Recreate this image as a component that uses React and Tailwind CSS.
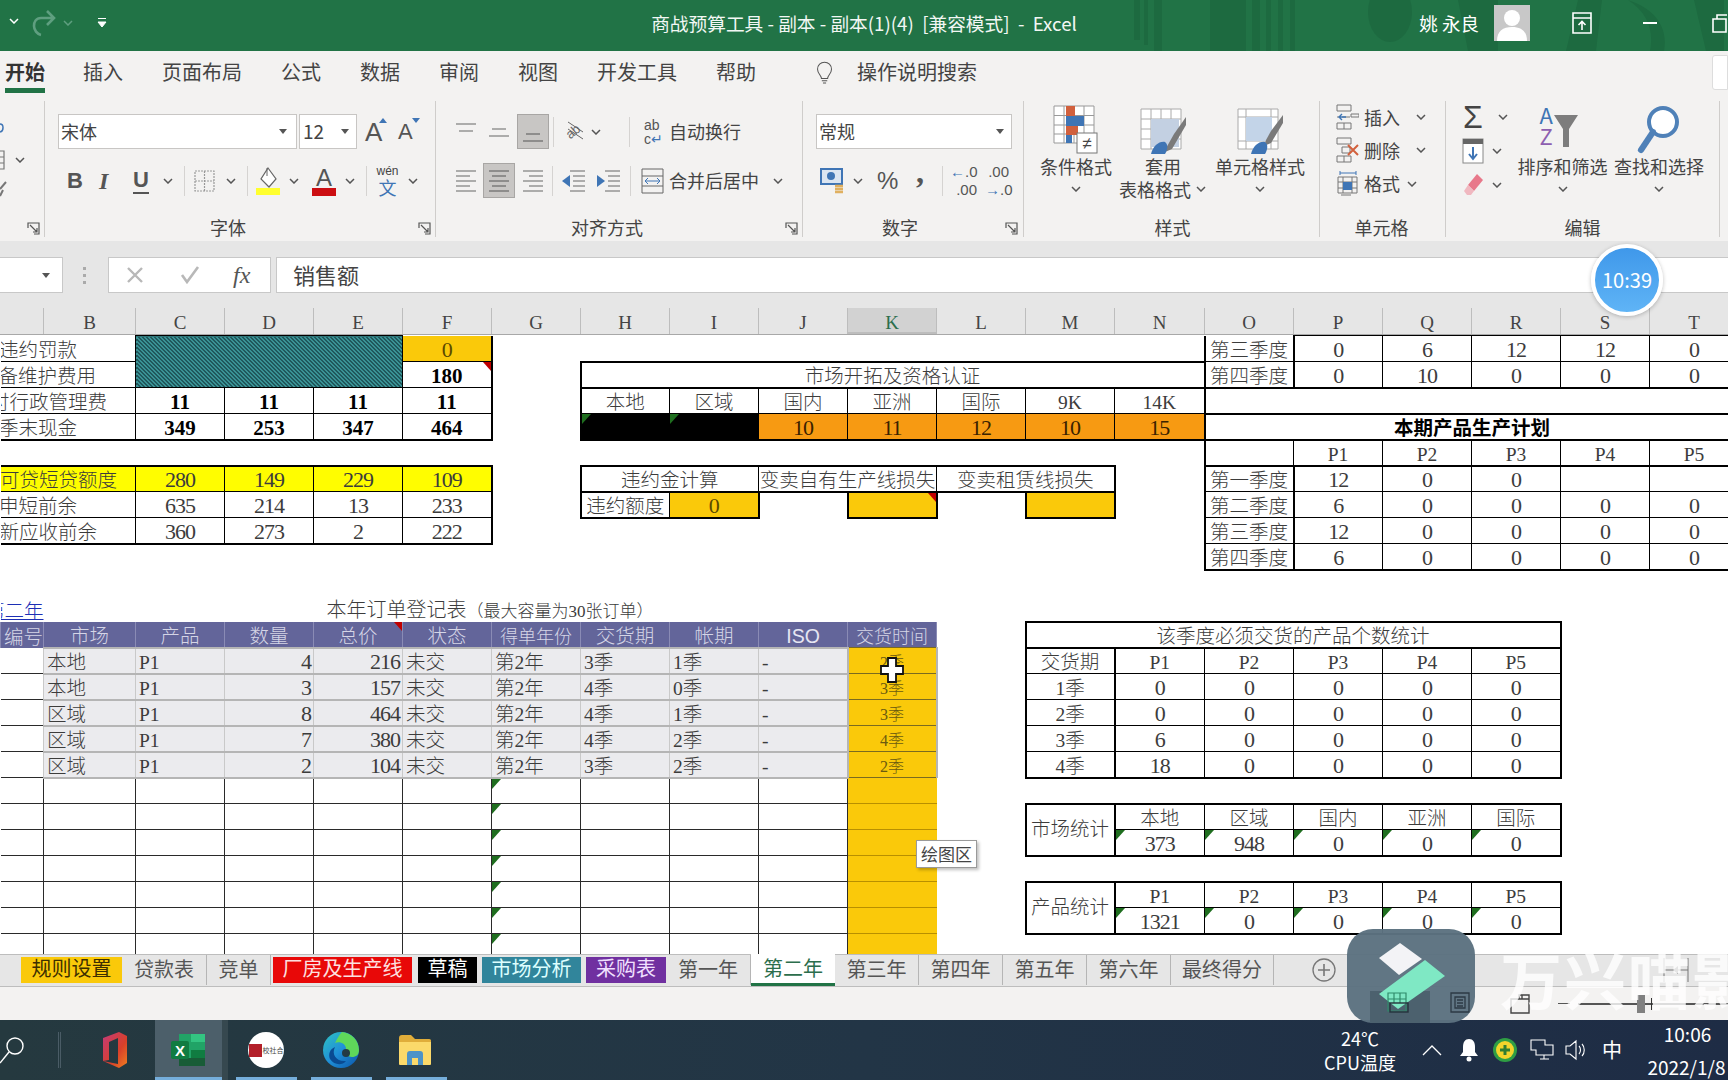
import React from 'react';

const cols = [43, 92, 89, 89, 89, 89, 89, 89, 89, 89, 89, 89, 89, 90, 89, 89, 89, 89, 89, 89];
const letters = ['', 'B', 'C', 'D', 'E', 'F', 'G', 'H', 'I', 'J', 'K', 'L', 'M', 'N', 'O', 'P', 'Q', 'R', 'S', 'T'];

const c = (t = '', cls = '', span = 1, rs = 1, mark = '') => ({ t, cls, span, rs, mark });
const lab = (t, pr, b) => c(<div className={`flex justify-end whitespace-nowrap ${pr}`}>{t}</div>, b, 2);
const blank = (n = 1) => c('', '', n);

const thin = 'border border-black';
const hatch = 'bg-[repeating-linear-gradient(45deg,#143c40_0,#143c40_0.9px,#46aeb1_0.9px,#46aeb1_2.828px)] border border-black';
const yellow = 'bg-[#fffd00] border border-black border-t-2';
const gold = 'bg-[#fac90a] text-[#5a4a00]';
const bold = 'font-bold text-black border border-black';
const ql = 'border-l-2 border-r-2 border-b border-black';
const purple = 'bg-[#63659a] text-[#d5d5e6] border-x border-[#8a8bb5]';
const od = 'bg-[#ebebee] border-x border-y-2 border-x-[#c9c9c9] border-y-[#b5b5b5]';
const odl = `${od} text-left pl-[3px]`;
const odr = `${od} text-right pr-[2px]`;
const gd = 'bg-[#fac90a] text-[#6b5b10] text-[16px] border-y border-x-2 border-y-[#7a6a20] border-x-[#b5b5b5]';
const em = 'border border-[#2a2a2a]';
const gridRow = () => [c('', 'border-b border-[#2a2a2a]'), ...[0, 1, 2, 3, 4].map(() => c('', em)), c('', em, 1, 1, 'g'), c('', em), c('', em), c('', em), c('', 'bg-[#fac90a] border-y border-[#b88f00]')];
const order = (a, b, d, e, f, g) => [
  c('', 'border-b border-[#2a2a2a]'),
  c(a, odl), c('P1', odl), c(b, odr), c(d, odr), c('未交', odl), c('第2年', odl), c(e, odl), c(f, odl), c('-', odl), c(g, gd),
];
const five = (v, cls = thin) => v.map((x) => c(x, cls));
const statM = (v) => v.map((x, i) => c(x, `border-l border-t border-b-2 border-black ${i === 4 ? 'border-r-2' : 'border-r'}`, 1, 1, 'g'));

const rows = [
  [lab('违约罚款', 'pr-[58px]', 'border-b border-black'), c('', hatch, 3, 2), c('0', `${gold} border-b border-r-2 border-black`), blank(8), c('第三季度', ql), ...five([0, 6, 12, 12, 0])],
  [lab('设备维护费用', 'pr-[39px]', 'border-b border-black'), c('180', 'font-bold text-black border-r-2 border-b border-black', 1, 1, 'r'), blank(), c('市场开拓及资格认证', 'border-2 border-black', 7), c('第四季度', 'border-l-2 border-r-2 border-b-2 border-black'), ...five([0, 10, 0, 0, 0], 'border-x border-t border-b-2 border-black')],
  [lab('支付行政管理费', 'pr-[28px]', 'border-b border-black'), c('11', bold), c('11', bold), c('11', bold), c('11', 'font-bold text-black border-y border-l border-r-2 border-black'), blank(), c('本地', `${thin} border-l-2`), c('区域', thin), c('国内', thin), c('亚洲', thin), c('国际', thin), c('9K', thin), c('14K', 'border-y border-l border-r-2 border-black'), c('', 'border-l-2 border-y-2 border-black', 6)],
  [lab('季末现金', 'pr-[58px]', 'border-b-2 border-black'), c('349', `${bold} border-b-2`), c('253', `${bold} border-b-2`), c('347', `${bold} border-b-2`), c('464', 'font-bold text-black border-t border-l border-r-2 border-b-2 border-black'), blank(), c('', 'bg-black border-l-2 border-b-2 border-black', 1, 1, 'g'), c('', 'bg-black border-b-2 border-black', 1, 1, 'g'), ...['10', '11', '12', '10', '15'].map((x) => c(x, 'bg-[#f79a12] text-[#3a2200] border-x border-t border-b-2 border-black')), c('本期产品生产计划', 'font-bold text-black border-l-2 border-y-2 border-black', 6)],
  [blank(14), c('', 'border-l-2 border-b-2 border-black'), ...five(['P1', 'P2', 'P3', 'P4', 'P5'], 'border-x border-t border-b-2 border-black')],
  [lab('可贷短贷额度', 'pr-[18px]', 'bg-[#fffd00] border-t-2 border-b border-black'), c('280', yellow), c('149', yellow), c('229', yellow), c('109', 'bg-[#fffd00] border-t-2 border-b border-l border-r-2 border-black'), blank(), c('违约金计算', 'border-l-2 border-t-2 border-b-2 border-r border-black', 2), c('变卖自有生产线损失', 'border-t-2 border-b-2 border-r border-black text-[19.5px]', 2), c('变卖租赁线损失', 'border-t-2 border-b-2 border-r-2 border-black', 2), blank(), c('第一季度', ql), ...five([12, 0, 0, '', ''])],
  [lab('申短前余', 'pr-[58px]', 'border-b border-black'), ...five([635, 214, 13]), c('233', 'border-y border-l border-r-2 border-black'), blank(), c('违约额度', 'border-l-2 border-b-2 border-r border-black'), c('0', `${gold} border-b-2 border-r-2 border-black`), blank(), c('', `${gold} border-x-2 border-b-2 border-black`, 1, 1, 'r'), blank(), c('', `${gold} border-x-2 border-b-2 border-black`), blank(), c('第二季度', ql), ...five([6, 0, 0, 0, 0])],
  [lab('新应收前余', 'pr-[38px]', 'border-b-2 border-black'), ...five([360, 273, 2], 'border-x border-t border-b-2 border-black'), c('222', 'border-t border-l border-r-2 border-b-2 border-black'), blank(8), c('第三季度', ql), ...five([12, 0, 0, 0, 0])],
  [blank(14), c('第四季度', 'border-l-2 border-r-2 border-b-2 border-black'), ...five([6, 0, 0, 0, 0], 'border-x border-t border-b-2 border-black')],
  [blank(20)],
  [c(<div className="flex justify-end whitespace-nowrap text-[#1c2fb5] underline">第二年</div>, ''), c(<span>本年订单登记表<span className="text-[17px]">（最大容量为30张订单）</span></span>, 'text-[20px]', 10), blank(9)],
  [c(<div className="flex justify-end whitespace-nowrap">编号</div>, purple), c('市场', purple), c('产品', purple), c('数量', purple), c('总价', purple, 1, 1, 'r'), c('状态', purple), c('得单年份', `${purple} text-[18px]`), c('交货期', purple), c('帐期', purple), c(<span className="font-['Liberation_Sans',sans-serif] text-[#e6e6f2]">ISO</span>, purple), c('交货时间', `${purple} text-[18px]`), blank(), c('该季度必须交货的产品个数统计', 'border-2 border-black', 6), blank(2)],
  [...order('本地', 4, 216, '3季', '1季', '2季'), blank(), c('交货期', 'border-l-2 border-r-2 border-b border-black'), ...five(['P1', 'P2', 'P3', 'P4']), c('P5', 'border-y border-l border-r-2 border-black'), blank(2)],
  [...order('本地', 3, 157, '4季', '0季', '3季'), blank(), c('1季', ql), ...five([0, 0, 0, 0]), c('0', 'border-y border-l border-r-2 border-black'), blank(2)],
  [...order('区域', 8, 464, '4季', '1季', '3季'), blank(), c('2季', ql), ...five([0, 0, 0, 0]), c('0', 'border-y border-l border-r-2 border-black'), blank(2)],
  [...order('区域', 7, 380, '4季', '2季', '4季'), blank(), c('3季', ql), ...five([6, 0, 0, 0]), c('0', 'border-y border-l border-r-2 border-black'), blank(2)],
  [...order('区域', 2, 104, '3季', '2季', '2季'), blank(), c('4季', 'border-l-2 border-r-2 border-b-2 border-black'), ...five([18, 0, 0, 0], 'border-x border-t border-b-2 border-black'), c('0', 'border-t border-l border-r-2 border-b-2 border-black'), blank(2)],
  [...gridRow(), blank(9)],
  [...gridRow(), blank(), c('市场统计', 'border-2 border-black', 1, 2), ...['本地', '区域', '国内', '亚洲', '国际'].map((x, i) => c(x, `border-t-2 border-x border-b border-black ${i === 4 ? 'border-r-2' : ''}`)), blank(2)],
  [...gridRow(), blank(), ...statM([373, 948, 0, 0, 0]), blank(2)],
  [...gridRow(), blank(9)],
  [...gridRow(), blank(), c('产品统计', 'border-2 border-black', 1, 2), ...['P1', 'P2', 'P3', 'P4', 'P5'].map((x, i) => c(x, `border-t-2 border-x border-b border-black ${i === 4 ? 'border-r-2' : ''}`)), blank(2)],
  [...gridRow(), blank(), ...statM([1321, 0, 0, 0, 0]), blank(2)],
  [...gridRow(), blank(9)],
];

function Mark({ m }) {
  if (m === 'g') return <div className="absolute left-0 top-0 h-0 w-0 border-t-[10px] border-r-[9px] border-t-[#1f6e1f] border-r-transparent" />;
  if (m === 'r') return <div className="absolute right-0 top-0 h-0 w-0 border-t-[9px] border-l-[8px] border-t-[#c00000] border-l-transparent" />;
  return null;
}

function Content({ x }) {
  if ((typeof x.t === 'number' || typeof x.t === 'string') && /^\d+$/.test(String(x.t))) {
    return <span className={x.cls.includes('font-bold') ? 'text-[21px]' : 'text-[22px] tracking-[-1px]'}>{x.t}</span>;
  }
  return x.t;
}

function Sheet() {
  return (
    <div className="h-[619px] shrink-0 overflow-hidden bg-white">
      <table className="w-[1738px] table-fixed border-collapse font-['Liberation_Serif','Noto_Sans_CJK_SC',serif] text-[19.5px] font-light leading-[20px] text-[#3c3c3c]">
        <colgroup>
          {cols.map((w, i) => (
            <col key={i} style={{ width: w }} />
          ))}
        </colgroup>
        <tbody>
          {rows.map((r, i) => (
            <tr key={i} className="h-[26px]">
              {r.map((x, j) => (
                <td key={j} colSpan={x.span} rowSpan={x.rs} className={`relative overflow-hidden whitespace-nowrap p-0 text-center ${x.rs > 1 ? 'align-middle' : 'align-bottom'} ${x.cls}`}>
                  <Mark m={x.mark} />
                  <Content x={x} />
                </td>
              ))}
            </tr>
          ))}
        </tbody>
      </table>
    </div>
  );
}

const Chev = ({ cls = '', color = '#555' }) => (
  <svg width="10" height="6" viewBox="0 0 10 6" className={`shrink-0 ${cls}`}>
    <path d="M1 1l4 4 4-4" fill="none" stroke={color} strokeWidth="1.5" />
  </svg>
);
const Caret = ({ cls = '' }) => (
  <svg width="8" height="5" viewBox="0 0 8 5" className={`shrink-0 ${cls}`}>
    <path d="M0 0h8L4 5z" fill="#555" />
  </svg>
);
const Lines = ({ d, w = 20, h = 24, cls = '', stroke = '#666', dash }) => (
  <svg width={w} height={h} viewBox={`0 0 ${w} ${h}`} className={`shrink-0 ${cls}`}>
    <path d={d} fill="none" stroke={stroke} strokeWidth="1.2" strokeDasharray={dash} />
  </svg>
);
const Sep = ({ cls = '' }) => <div className={`h-[30px] w-px shrink-0 bg-[#d5d3d1] ${cls}`} />;
const Launcher = ({ cls = '' }) => (
  <svg width="13" height="13" viewBox="0 0 13 13" className={`absolute top-[3px] ${cls}`}>
    <path d="M1 6V1h11v11H7M3 3l7 7M10 6v4H6" fill="none" stroke="#555" strokeWidth="1.2" />
  </svg>
);
const GroupLabel = ({ children, cls = '', launcher }) => (
  <div className={`relative mb-[2px] h-[16px] shrink-0 text-center text-[18px] leading-[16px] text-[#444] ${cls}`}>
    {children}
    {launcher}
  </div>
);
const RowF = ({ children }) => <div className="flex h-[35px] shrink-0 items-center">{children}</div>;
const Group = ({ w, children, last }) => (
  <div className={`flex h-[136px] shrink-0 flex-col ${w} ${last ? '' : 'border-r border-[#cfcdcb]'}`}>{children}</div>
);

function TitleBar() {
  return (
    <div className="relative grid h-[51px] shrink-0 grid-cols-[1fr_auto_1fr] items-center overflow-hidden bg-[#217346] pb-[5px] text-white">
      <svg width="600" height="51" viewBox="0 0 600 51" className="absolute left-[1128px] top-0">
        <g fill="#1d6a40">
          <rect x="6" y="0" width="6" height="40" />
          <rect x="16" y="0" width="4" height="45" />
          <rect x="26" y="0" width="8" height="51" />
          <rect x="82" y="0" width="36" height="51" />
          <rect x="124" y="0" width="8" height="51" />
          <rect x="138" y="0" width="5" height="51" />
          <rect x="150" y="0" width="5" height="51" />
          <rect x="162" y="0" width="5" height="51" />
          <ellipse cx="262" cy="12" rx="22" ry="30" />
          <path d="M330 0h40v51h-30zM450 0h24l-6 51h-30zM500 0c30 10 40 30 36 51h-14c4-20-2-38-22-51zM566 0h30v51h-18z" />
        </g>
      </svg>
      <div className="relative flex items-center pl-[9px]">
        <Chev color="#fff" cls="mt-[-4px]" />
        <svg width="26" height="30" viewBox="0 0 26 30" className="ml-[12px]">
          <path d="M22 10H10C5 10 3 14 3 18s3 8 7 9M16 3l7 7-7 7" fill="none" stroke="#5f9f80" strokeWidth="2.6" />
        </svg>
        <Chev color="#5f9f80" cls="ml-[6px]" />
        <svg width="10" height="12" viewBox="0 0 10 12" className="ml-[24px]">
          <path d="M1 1.5h8M1 5h8l-4 5z" fill="#fff" stroke="#fff" />
        </svg>
      </div>
      <div className="relative whitespace-pre text-[18.7px] leading-none text-[#f2f7f4]">{'商战预算工具 - 副本 - 副本(1)(4)  [兼容模式]  -  Excel'}</div>
      <div className="relative flex items-center justify-end">
        <div className="mr-[15px] whitespace-nowrap text-[18.5px] leading-none">姚 永良</div>
        <div className="mr-[42px] flex h-[36px] w-[36px] items-end justify-center overflow-hidden bg-[#c8c8c8]">
          <svg width="36" height="36" viewBox="0 0 36 36">
            <circle cx="18" cy="13" r="8" fill="#fff" />
            <path d="M3 36c0-10 6-14 15-14s15 4 15 14z" fill="#fff" />
          </svg>
        </div>
        <svg width="20" height="22" viewBox="0 0 20 22" className="mr-[51px]">
          <path d="M1 1h18v20H1zM1 6h18M10 18v-8M6.5 13l3.5-3.5 3.5 3.5" fill="none" stroke="#fff" strokeWidth="1.6" />
        </svg>
        <div className="mr-[55px] h-[2px] w-[14px] bg-white" />
        <svg width="16" height="20" viewBox="0 0 16 20">
          <path d="M1 6h13v13H1zM5 6V2h10" fill="none" stroke="#fff" strokeWidth="1.6" />
        </svg>
      </div>
    </div>
  );
}

function Tabs() {
  const items = [
    ['插入', 'ml-[38px]'],
    ['页面布局', 'ml-[39px]'],
    ['公式', 'ml-[39px]'],
    ['数据', 'ml-[39px]'],
    ['审阅', 'ml-[39px]'],
    ['视图', 'ml-[39px]'],
    ['开发工具', 'ml-[39px]'],
    ['帮助', 'ml-[39px]'],
  ];
  return (
    <div className="flex h-[49px] shrink-0 items-start bg-[#f3f2f1] pl-[5px] text-[20px] leading-[42px] text-[#444]">
      <div className="flex h-[42px] w-[41px] flex-col items-center whitespace-nowrap font-bold text-[#333]">
        <span className="h-[37px]">开始</span>
        <div className="h-[5px] w-full shrink-0 bg-[#217346]" />
      </div>
      {items.map(([t, m]) => (
        <span key={t} className={`whitespace-nowrap ${m}`}>{t}</span>
      ))}
      <svg width="22" height="28" viewBox="0 0 22 28" className="ml-[60px] mt-[8px]">
        <path d="M7 21c0-4-5-6-5-12a9 9 0 0 1 18 0c0 6-5 8-5 12zM7.5 24h7M9 27h4" fill="none" stroke="#555" strokeWidth="1.3" />
      </svg>
      <span className="ml-[24px] whitespace-nowrap text-[20px]">操作说明搜索</span>
      <div className="ml-[735px] mt-[4px] h-[35px] w-[20px] rounded-l-[3px] border border-[#ddd] bg-white" />
    </div>
  );
}

const BigBtn = ({ w, icon, lines, chevMl = '' }) => (
  <div className={`flex shrink-0 flex-col items-center ${w}`}>
    <div className="flex h-[53px] items-end">{icon}</div>
    <div className="whitespace-nowrap text-center text-[18px] leading-[24px] text-[#444]">{lines}</div>
    <Chev cls={`mt-[8px] ${chevMl}`} />
  </div>
);

function Ribbon() {
  const ICondFmt = (
    <svg width="48" height="50" viewBox="0 0 48 50">
      <path d="M2 2h40v37H2zM2 11.5h40M2 21h40M2 30h40M12 2v37M22 2v37M32 2v37" fill="#fff" stroke="#999" strokeWidth="1" />
      <rect x="14" y="2" width="9" height="10" fill="#d1603d" />
      <rect x="14" y="12" width="18" height="10" fill="#3f75b5" />
      <rect x="14" y="22" width="12" height="9" fill="#d1603d" />
      <rect x="14" y="31" width="6" height="8" fill="#3f75b5" />
      <rect x="25" y="29" width="20" height="20" fill="#fff" stroke="#777" />
      <text x="35" y="45" textAnchor="middle" fontSize="17" fill="#444" fontFamily="Liberation Sans">≠</text>
    </svg>
  );
  const ITable = (
    <svg width="46" height="46" viewBox="0 0 46 46">
      <path d="M1 1h40v40H1zM1 11h40M1 21h40M1 31h40M11 1v40M21 1v40M31 1v40" fill="#fff" stroke="#aaa" />
      <rect x="11" y="11" width="28" height="28" fill="#c3d0e2" />
      <path d="M25 42l9-16 12-17 0 8-14 24-7 3" fill="#7a7a7a" />
      <path d="M11 46c2-8 8-13 14-12 3 2 3 7 0 12z" fill="#3f75b5" />
    </svg>
  );
  const IStyle = (
    <svg width="46" height="46" viewBox="0 0 46 46">
      <path d="M1 1h40v40H1zM1 9h40M1 33h40M9 1v40M34 1v40" fill="#fff" stroke="#aaa" />
      <rect x="9" y="9" width="26" height="24" fill="#c3d4e8" />
      <path d="M29 32l5-9 12-16 0 8-12 20-7 3" fill="#7a7a7a" />
      <path d="M14 46c2-8 8-13 14-12 3 2 3 7 0 12z" fill="#3f75b5" />
    </svg>
  );
  const ISort = (
    <div className="relative flex h-[50px] w-[46px] items-start">
      <div className="flex flex-col items-center text-[22px] leading-[21px]">
        <span className="text-[#3f75b5]">A</span>
        <span className="text-[#8e5fb0]">Z</span>
      </div>
      <svg width="26" height="34" viewBox="0 0 26 34" className="mt-[10px]">
        <path d="M1 1h24L16 15v18h-6V15z" fill="#7d7d7d" />
      </svg>
    </div>
  );
  const IFind = (
    <svg width="44" height="50" viewBox="0 0 44 50">
      <circle cx="26" cy="18" r="14" fill="#fff" stroke="#4f81b8" strokeWidth="4" />
      <path d="M16 28L4 46" stroke="#4f81b8" strokeWidth="6" strokeLinecap="round" />
    </svg>
  );
  return (
    <div className="relative flex h-[141px] shrink-0 items-start bg-[#f3f2f1] pt-[1px] text-[#444]">
      <Group w="w-[45px]">
        <div className="relative flex-1">
          <svg width="6" height="14" viewBox="0 0 6 14" className="absolute left-0 top-[22px]"><path d="M0 1c4 0 4 7 0 8" fill="none" stroke="#3f75b5" strokeWidth="1.5" /></svg>
          <svg width="6" height="22" viewBox="0 0 6 22" className="absolute left-0 top-[49px]"><path d="M0 1h4v18H0M0 7h4M0 13h4" fill="none" stroke="#777" strokeWidth="1.2" /></svg>
          <Chev cls="absolute left-[15px] top-[56px]" />
          <svg width="7" height="16" viewBox="0 0 7 16" className="absolute left-0 top-[80px]"><path d="M0 8l6-7M0 15l3-6" fill="none" stroke="#777" strokeWidth="2" /></svg>
        </div>
        <GroupLabel launcher={<Launcher cls="left-[27px]" />}>&nbsp;</GroupLabel>
      </Group>

      <Group w="w-[391px]">
        <div className="flex-1 pt-[13px]">
          <RowF>
            <div className="ml-[13px] flex h-[35px] w-[239px] items-center justify-between border border-[#c8c6c4] bg-white pl-[2px] pr-[9px] text-[18px]">
              <span>宋体</span><Caret />
            </div>
            <div className="ml-[2px] flex h-[35px] w-[58px] items-center justify-between border border-[#c8c6c4] bg-white pl-[3px] pr-[7px] text-[19px]">
              <span>12</span><Caret />
            </div>
            <div className="relative ml-[8px] w-[22px] font-['Liberation_Sans',sans-serif] text-[26px] leading-none text-[#555]">A<span className="absolute right-0 top-[-1px] h-0 w-0 border-x-[4px] border-b-[5px] border-x-transparent border-b-[#3f75b5]" /></div>
            <div className="relative ml-[11px] w-[22px] font-['Liberation_Sans',sans-serif] text-[22px] leading-none text-[#555]">A<span className="absolute right-0 top-[-3px] h-0 w-0 border-x-[4px] border-t-[5px] border-x-transparent border-t-[#3f75b5]" /></div>
          </RowF>
          <div className="h-[14px]" />
          <RowF>
            <span className="ml-[22px] w-[14px] font-['Liberation_Sans',sans-serif] text-[22px] font-bold text-[#555]">B</span>
            <span className="ml-[18px] w-[14px] font-['Liberation_Serif',serif] text-[24px] font-bold italic text-[#555]">I</span>
            <span className="ml-[20px] w-[16px] border-b-2 border-[#555] font-['Liberation_Sans',sans-serif] text-[22px] font-bold leading-[24px] text-[#555]">U</span>
            <Chev cls="ml-[14px]" />
            <Sep cls="ml-[11px]" />
            <Lines cls="ml-[9px]" w={21} h={24} stroke="#999" dash="2 1" d="M1 2h19v20H1zM1 12h19M10.5 2v20" />
            <Chev cls="ml-[11px]" />
            <Sep cls="ml-[11px]" />
            <svg width="24" height="28" viewBox="0 0 24 28" className="ml-[8px]">
              <path d="M12 1l8 11-7 8-8-8z" fill="#fff" stroke="#666" strokeWidth="1.2" />
              <path d="M11 1v8" stroke="#666" />
              <rect x="0" y="21" width="24" height="7" fill="#ffff2e" />
            </svg>
            <Chev cls="ml-[9px]" />
            <svg width="24" height="30" viewBox="0 0 24 30" className="ml-[13px]">
              <text x="12" y="20" textAnchor="middle" fontSize="24" fill="#555" fontFamily="Liberation Sans">A</text>
              <rect x="0" y="22" width="24" height="8" fill="#cc0e12" />
            </svg>
            <Chev cls="ml-[9px]" />
            <Sep cls="ml-[11px]" />
            <div className="ml-[10px] flex w-[21px] flex-col items-center">
              <span className="font-['Liberation_Sans',sans-serif] text-[12px] leading-[12px] text-[#444]">wén</span>
              <span className="text-[18px] leading-[20px] text-[#3f75b5]">文</span>
            </div>
            <Chev cls="ml-[10px]" />
          </RowF>
        </div>
        <GroupLabel launcher={<Launcher cls="left-[373px]" />}><span className="relative left-[-12px]">字体</span></GroupLabel>
      </Group>

      <Group w="w-[367px]">
        <div className="flex-1 pt-[13px]">
          <RowF>
            <Lines cls="ml-[20px]" d="M0 4h20M3 11h14" />
            <Lines cls="ml-[13px]" d="M3 9h14M0 16h20" />
            <div className="ml-[8px] flex h-[35px] w-[32px] items-center justify-center border border-[#a8a6a4] bg-[#c8c6c4]">
              <Lines d="M3 14h14M0 21h20" stroke="#555" />
            </div>
            <Sep cls="ml-[4px]" />
            <svg width="20" height="26" viewBox="0 0 20 26" className="ml-[11px]">
              <path d="M3 3l15 10M3 10l15 10" stroke="#666" fill="none" />
              <text x="1" y="17" fontSize="13" fill="#666" transform="rotate(-40 8 13)" fontFamily="Liberation Sans">ab</text>
            </svg>
            <Chev cls="ml-[6px]" />
            <Sep cls="ml-[28px]" />
            <div className="ml-[14px] flex w-[18px] flex-col font-['Liberation_Sans',sans-serif] text-[14px] leading-[14px] text-[#555]">
              <span>ab</span><span>c<span className="text-[#3f75b5]">↵</span></span>
            </div>
            <span className="ml-[7px] whitespace-nowrap text-[18px]">自动换行</span>
          </RowF>
          <div className="h-[14px]" />
          <RowF>
            <Lines cls="ml-[20px]" d="M0 2h20M0 7h14M0 12h20M0 17h14M0 22h20" />
            <div className="ml-[7px] flex h-[35px] w-[32px] items-center justify-center border border-[#a8a6a4] bg-[#c8c6c4]">
              <Lines d="M0 2h20M3 7h14M0 12h20M3 17h14M0 22h20" stroke="#555" />
            </div>
            <Lines cls="ml-[8px]" d="M0 2h20M6 7h14M0 12h20M6 17h14M0 22h20" />
            <Sep cls="ml-[9px]" />
            <svg width="24" height="24" viewBox="0 0 24 24" className="ml-[8px]">
              <path d="M9 2h15M12 7h12M12 12h12M12 17h12M9 22h15" stroke="#666" fill="none" />
              <path d="M9 6v12L1 12z" fill="#3f75b5" />
            </svg>
            <svg width="24" height="24" viewBox="0 0 24 24" className="ml-[11px]">
              <path d="M9 2h15M12 7h12M12 12h12M12 17h12M9 22h15" stroke="#666" fill="none" />
              <path d="M1 6v12l8-6z" fill="#3f75b5" />
            </svg>
            <Sep cls="ml-[10px]" />
            <svg width="23" height="26" viewBox="0 0 23 26" className="ml-[10px]">
              <path d="M1 1h21v24H1zM1 8h21M1 18h21" fill="none" stroke="#666" />
              <path d="M4 13h15M7 10l-3 3 3 3M16 10l3 3-3 3" fill="none" stroke="#3f75b5" />
            </svg>
            <span className="ml-[5px] whitespace-nowrap text-[18px]">合并后居中</span>
            <Chev cls="ml-[14px]" />
          </RowF>
        </div>
        <GroupLabel launcher={<Launcher cls="left-[349px]" />}><span className="relative left-[-12px]">对齐方式</span></GroupLabel>
      </Group>

      <Group w="w-[221px]">
        <div className="flex-1 pt-[13px]">
          <RowF>
            <div className="ml-[13px] flex h-[35px] w-[196px] items-center justify-between border border-[#c8c6c4] bg-white pl-[2px] pr-[7px] text-[18px]">
              <span>常规</span><Caret />
            </div>
          </RowF>
          <div className="h-[14px]" />
          <RowF>
            <svg width="25" height="26" viewBox="0 0 25 26" className="ml-[17px]">
              <rect x="1" y="1" width="21" height="15" fill="#dbe5f1" stroke="#3f75b5" strokeWidth="2" />
              <circle cx="11" cy="8" r="4" fill="#3f75b5" />
              <path d="M15 18h8M15 21h8M15 24h8" stroke="#e0b060" strokeWidth="2.4" />
            </svg>
            <Chev cls="ml-[8px]" />
            <span className="ml-[14px] w-[20px] font-['Liberation_Sans',sans-serif] text-[24px] text-[#555]">%</span>
            <span className="ml-[19px] mt-[-17px] w-[10px] font-['Liberation_Serif',serif] text-[32px] font-bold leading-[20px] text-[#555]">,</span>
            <Sep cls="ml-[16px]" />
            <div className="ml-[7px] flex w-[27px] flex-col font-['Liberation_Sans',sans-serif] text-[15px] leading-[18px] text-[#555]">
              <span className="whitespace-nowrap text-right"><span className="text-[#3f75b5]">←</span>.0</span>
              <span className="whitespace-nowrap text-right">.00</span>
            </div>
            <div className="ml-[8px] flex w-[24px] flex-col font-['Liberation_Sans',sans-serif] text-[15px] leading-[18px] text-[#555]">
              <span className="whitespace-nowrap text-right">.00</span>
              <span className="whitespace-nowrap text-right"><span className="text-[#3f75b5]">→</span>.0</span>
            </div>
          </RowF>
        </div>
        <GroupLabel launcher={<Launcher cls="left-[202px]" />}><span className="relative left-[-13px]">数字</span></GroupLabel>
      </Group>

      <Group w="w-[296px]">
        <div className="flex flex-1">
          <BigBtn w="w-[95px] pl-[9px]" icon={ICondFmt} lines="条件格式" />
          <div className="flex w-[89px] shrink-0 flex-col">
            <div className="flex h-[53px] items-end justify-center pr-[2px]">{ITable}</div>
            <div className="pr-[1px] text-center text-[18px] leading-[24px]">套用</div>
            <div className="flex items-center whitespace-nowrap text-[18px] leading-[22px]">表格格式<Chev cls="ml-[5px]" /></div>
          </div>
          <BigBtn w="w-[104px]" icon={IStyle} lines="单元格样式" />
        </div>
        <GroupLabel><span className="relative left-[1px]">样式</span></GroupLabel>
      </Group>

      <Group w="w-[126px]">
        <div className="flex-1 text-[18px]">
          <div className="flex h-[32px] items-center">
            <svg width="23" height="26" viewBox="0 0 23 26" className="ml-[16px]"><path d="M1 1h14v6H1zM1 19h14v6H1zM8 19v6M1 13h4M15 13h8v-3h-8zM6 13h8" fill="none" stroke="#777" /><path d="M10 13H4M6 10l-3 3 3 3" fill="none" stroke="#3f75b5" strokeWidth="1.4" /></svg>
            <span className="ml-[5px]">插入</span>
            <Chev cls="ml-[16px]" />
          </div>
          <div className="flex h-[34px] items-center">
            <svg width="23" height="26" viewBox="0 0 23 26" className="ml-[16px]"><path d="M1 1h14v6H1zM1 19h14v6H1zM8 19v6M6 10h8v6H6z" fill="none" stroke="#777" /><path d="M12 8l10 10M22 8L12 18" stroke="#d1603d" strokeWidth="2" /></svg>
            <span className="ml-[5px]">删除</span>
            <Chev cls="ml-[16px]" />
          </div>
          <div className="flex h-[33px] items-center">
            <svg width="23" height="28" viewBox="0 0 23 28" className="ml-[16px]"><path d="M2 7h19v16H2zM2 12h19M2 18h19M7 7v16M16 7v16M5 25h10" fill="none" stroke="#777" /><path d="M4 3h16M4 1v4M20 1v4" stroke="#3f75b5" fill="none" /><rect x="7" y="12" width="9" height="8" fill="#3f75b5" /></svg>
            <span className="ml-[5px]">格式</span>
            <Chev cls="ml-[7px]" />
          </div>
        </div>
        <GroupLabel><span className="relative left-[-1px]">单元格</span></GroupLabel>
      </Group>

      <Group w="w-[274px]">
        <div className="flex flex-1">
          <div className="flex w-[69px] shrink-0 flex-col">
            <div className="flex h-[32px] items-center">
              <span className="ml-[17px] w-[24px] font-['Liberation_Sans',sans-serif] text-[32px] leading-none text-[#444]">Σ</span>
              <Chev cls="ml-[11px]" />
            </div>
            <div className="flex h-[35px] items-center">
              <svg width="22" height="26" viewBox="0 0 22 26" className="ml-[16px]"><rect x="1" y="1" width="20" height="24" fill="#fff" stroke="#888" /><rect x="1" y="1" width="20" height="5" fill="#666" /><path d="M11 9v12M7 16l4 5 4-5" fill="none" stroke="#3f75b5" strokeWidth="2" /></svg>
              <Chev cls="ml-[8px]" />
            </div>
            <div className="flex h-[33px] items-center">
              <svg width="22" height="24" viewBox="0 0 22 24" className="ml-[16px]"><path d="M15 1l6 6-9 11-6-6z" fill="#e8788a" /><path d="M6 12l6 6-3 4H5l-3-4z" fill="#f0b8c0" /></svg>
              <Chev cls="ml-[8px]" />
            </div>
          </div>
          <BigBtn w="w-[95px]" icon={ISort} lines="排序和筛选" />
          <BigBtn w="w-[98px]" icon={IFind} lines="查找和选择" />
        </div>
        <GroupLabel><span className="relative left-[0px]">编辑</span></GroupLabel>
      </Group>
    </div>
  );
}

function FormulaBar() {
  return (
    <div className="flex h-[67px] shrink-0 items-start bg-[#e6e6e6] pt-[16px]">
      <div className="flex h-[36px] w-[63px] items-center justify-end border-y border-r border-[#c8c8c8] bg-white pr-[12px]"><Caret /></div>
      <div className="ml-[8px] flex h-[36px] w-[26px] flex-col items-center justify-center gap-[4px]">
        <span className="h-[3px] w-[3px] bg-[#aaa]" /><span className="h-[3px] w-[3px] bg-[#aaa]" /><span className="h-[3px] w-[3px] bg-[#aaa]" />
      </div>
      <div className="ml-[11px] flex h-[36px] w-[163px] items-center border border-[#c8c8c8] bg-white">
        <svg width="18" height="18" viewBox="0 0 18 18" className="ml-[17px]"><path d="M2 2l14 14M16 2L2 16" stroke="#b8b8b8" strokeWidth="2.4" /></svg>
        <svg width="20" height="18" viewBox="0 0 20 18" className="ml-[36px]"><path d="M2 9l5 7L18 1" fill="none" stroke="#b8b8b8" strokeWidth="2.6" /></svg>
        <span className="ml-[33px] font-['Liberation_Serif',serif] text-[24px] italic leading-none text-[#555]">fx</span>
      </div>
      <div className="ml-[5px] flex h-[36px] flex-1 items-center border-y border-l border-[#c8c8c8] bg-white pb-[1px] pl-[16px] text-[22px] text-[#444]">销售额</div>
    </div>
  );
}

function ColHeader() {
  return (
    <div className="flex h-[27px] shrink-0 border-b border-[#a8a8a8] bg-[#e6e6e6] font-['Liberation_Serif',serif] text-[19px] leading-[30px] text-[#444]">
      {cols.map((w, i) => (
        <div key={i} style={{ width: w }} className={`shrink-0 text-center ${i > 0 ? 'border-l border-[#bdbdbd]' : ''} ${letters[i] === 'K' ? 'border-b-2 border-[#217346] bg-[#d2d2d2] text-[#2c6e4c]' : ''}`}>
          {letters[i]}
        </div>
      ))}
    </div>
  );
}

function SheetTabs() {
  const plain = 'flex h-[30px] items-center justify-center border-r border-[#b5b5b5] pb-[3px] text-[#555]';
  const fill = 'flex h-[26px] items-center justify-center pb-[4px]';
  return (
    <div className="flex h-[33px] shrink-0 border-y border-[#bdbdbd] bg-[#e6e6e6] pl-[21px] text-[20px] leading-none">
      <div className={`${fill} mt-[2px] w-[101px] bg-[#fac90a] text-[#3d2f00]`}>规则设置</div>
      <div className={`${plain} w-[85px]`}>贷款表</div>
      <div className={`${plain} w-[64px]`}>竞单</div>
      <div className={`${fill} mt-[2px] ml-[2px] w-[139px] bg-[#e80808] text-[#fde0e0]`}>厂房及生产线</div>
      <div className={`${fill} mt-[2px] ml-[6px] w-[59px] bg-black text-white`}>草稿</div>
      <div className={`${fill} mt-[2px] ml-[5px] w-[99px] bg-[#31859b] text-[#dff]`}>市场分析</div>
      <div className={`${fill} mt-[2px] ml-[5px] w-[80px] bg-[#7030a0] text-[#f0e0ff]`}>采购表</div>
      <div className={`${plain} w-[85px]`}>第一年</div>
      <div className="mt-[-1px] flex h-[32px] w-[84px] items-center justify-center border-b-[3px] border-[#217346] bg-white pb-[2px] text-[#2c6e4c]">第二年</div>
      <div className={`${plain} w-[84px]`}>第三年</div>
      <div className={`${plain} w-[84px]`}>第四年</div>
      <div className={`${plain} w-[84px]`}>第五年</div>
      <div className={`${plain} w-[84px]`}>第六年</div>
      <div className={`${plain} w-[103px]`}>最终得分</div>
      <svg width="24" height="24" viewBox="0 0 24 24" className="ml-[38px] mt-[3px]"><circle cx="12" cy="12" r="11" fill="none" stroke="#777" strokeWidth="1.3" /><path d="M12 6v12M6 12h12" stroke="#777" strokeWidth="1.6" /></svg>
      <svg width="26" height="24" viewBox="0 0 26 24" className="ml-[327px] mt-[3px]"><path d="M1 0v24M25 0v24M1 12h24" stroke="#777" fill="none" /><path d="M15 8l-5 4 5 4z" fill="#777" /></svg>
    </div>
  );
}

function StatusBar() {
  return (
    <div className="flex h-[33px] shrink-0 items-center bg-[#f3f2f1]">
      <svg width="20" height="20" viewBox="0 0 20 20" className="ml-[1510px]"><path d="M1 5h18v14H1zM9 5V1h10v4M12 1v4" fill="none" stroke="#444" strokeWidth="1.4" /></svg>
      <div className="ml-[28px] h-px w-[12px] bg-[#555]" />
      <div className="relative ml-[8px] h-[2px] flex-1 bg-[#555]">
        <span className="absolute left-[59px] top-[-8px] h-[18px] w-[8px] bg-[#808080]" />
        <span className="absolute left-[73px] top-[-5px] h-[12px] w-px bg-[#333]" />
      </div>
    </div>
  );
}

function Taskbar() {
  return (
    <div className="relative flex h-[60px] shrink-0 items-center bg-linear-to-r from-[#25393f] via-[#223546] to-[#1e2c45] text-white">
      <svg width="24" height="34" viewBox="0 0 24 34"><circle cx="15" cy="13" r="8" fill="none" stroke="#fff" strokeWidth="1.4" /><path d="M9 19L0 30" stroke="#fff" strokeWidth="1.4" /></svg>
      <div className="ml-[34px] h-[36px] w-[3px] border-x border-[#4a5c66]" />
      <svg width="28" height="38" viewBox="0 0 28 38" className="ml-[40px]">
        <defs>
          <linearGradient id="off" x1="0" y1="0" x2="1" y2="1"><stop offset="0" stopColor="#c43a7a" /><stop offset="0.6" stopColor="#d8402a" /><stop offset="1" stopColor="#f08020" /></linearGradient>
        </defs>
        <path d="M2 7L18 1l8 4v27l-8 5L2 30l15 3V7L8 11v18l-6 1z" fill="url(#off)" />
      </svg>
      <div className="relative ml-[26px] flex h-[60px] w-[73px] items-center justify-center bg-[#4c5f6a]">
        <svg width="36" height="36" viewBox="0 0 36 36" className="ml-[-6px]">
          <path d="M8 2h26v32H8z" fill="#21a366" />
          <path d="M20 2h14v8H20z" fill="#33c481" />
          <path d="M20 18h14v8H20z" fill="#107c41" />
          <path d="M8 26h26v8H8z" fill="#185c37" />
          <rect x="0" y="9" width="18" height="18" rx="2" fill="#107c41" />
          <text x="9" y="24" textAnchor="middle" fontSize="15" fontWeight="700" fill="#fff" fontFamily="Liberation Sans">X</text>
        </svg>
        <div className="absolute bottom-0 left-0 h-[3px] w-[67px] bg-[#75aedb]" />
        <div className="absolute right-0 top-0 h-full w-[6px] bg-[#36484f]" />
      </div>
      <div className="relative ml-[20px] flex h-[36px] w-[36px] shrink-0 items-center justify-center rounded-full bg-white">
        <span className="h-[13px] w-[13px] shrink-0 bg-[#b3202a]" />
        <span className="ml-[1px] whitespace-nowrap text-[7px] leading-none text-[#444]">校社合</span>
      </div>
      <svg width="38" height="38" viewBox="0 0 38 38" className="ml-[38px]">
        <defs>
          <linearGradient id="edge" x1="0" y1="0" x2="1" y2="1"><stop offset="0" stopColor="#2fc4c0" /><stop offset="0.5" stopColor="#1f8fd8" /><stop offset="1" stopColor="#0b54a8" /></linearGradient>
        </defs>
        <circle cx="19" cy="19" r="18" fill="url(#edge)" />
        <path d="M20 1c10 1 17 9 17 18 0 5-3 7-7 7-5 0-7-4-6-8 0-5-6-8-11-6C16 6 18 3 20 1z" fill="#5fd85a" />
        <path d="M13 16c-4 8 2 15 11 14-4 5-12 4-16-2-2-5 0-10 5-12z" fill="#0a4b93" />
        <circle cx="24" cy="22" r="4" fill="#243a45" />
      </svg>
      <svg width="34" height="32" viewBox="0 0 34 32" className="ml-[38px]">
        <path d="M1 4c0-2 1-3 3-3h9l4 4h14c2 0 2 1 2 2v23H1z" fill="#e0ad3a" />
        <path d="M1 8h32v22c0 1-1 1-2 1H3c-1 0-2 0-2-1z" fill="#fbd96a" />
        <path d="M9 31V20c0-2 1-3 3-3h10c2 0 3 1 3 3v11h-5v-7h-6v7z" fill="#4d93c8" />
      </svg>
      <div className="flex-1" />
      <div className="flex w-[80px] flex-col items-center text-[18px] leading-[24px]"><span>24℃</span><span className="whitespace-nowrap">CPU温度</span></div>
      <svg width="20" height="12" viewBox="0 0 20 12" className="ml-[22px]"><path d="M1 11l9-9 9 9" fill="none" stroke="#fff" strokeWidth="1.3" /></svg>
      <svg width="20" height="24" viewBox="0 0 20 24" className="ml-[17px]"><path d="M10 1c-4 0-6 3-6 8v5l-3 4h18l-3-4V9c0-5-2-8-6-8z" fill="#fff" /><circle cx="10" cy="21" r="2.5" fill="#fff" /></svg>
      <svg width="24" height="24" viewBox="0 0 24 24" className="ml-[14px]"><circle cx="12" cy="12" r="12" fill="#2f9e44" /><circle cx="12" cy="12" r="9" fill="#f2d42c" /><path d="M12 7v10M7 12h10" stroke="#2f7d32" strokeWidth="3" /></svg>
      <svg width="24" height="22" viewBox="0 0 24 22" className="ml-[13px]"><path d="M1 1h14v5h8v10H6v-5H1zM10 20h9M14 16v4" fill="none" stroke="#fff" strokeWidth="1.1" /></svg>
      <svg width="24" height="22" viewBox="0 0 24 22" className="ml-[11px]"><path d="M1 7h4l6-5v18l-6-5H1zM14 7c2 2 2 6 0 8M17 5c3 3 3 9 0 12" fill="none" stroke="#fff" strokeWidth="1.1" /></svg>
      <span className="ml-[13px] w-[24px] text-[20px] leading-none">中</span>
      <div className="ml-[17px] mr-[-30px] flex w-[115px] shrink-0 flex-col items-center whitespace-nowrap text-[19px] leading-[33px]"><span className="relative left-[-13px]">10:06</span><span className="relative left-[-14px]">2022/1/8</span></div>
      <div className="absolute bottom-0 left-[236px] h-[3px] w-[61px] bg-[#75aedb]" />
      <div className="absolute bottom-0 left-[311px] h-[3px] w-[61px] bg-[#75aedb]" />
      <div className="absolute bottom-0 left-[386px] h-[3px] w-[61px] bg-[#75aedb]" />
    </div>
  );
}

export default function App() {
  return (
    <div className="relative flex h-[1080px] w-[1728px] flex-col overflow-hidden bg-white font-['Noto_Sans_CJK_SC','Liberation_Sans',sans-serif]">
      <TitleBar />
      <Tabs />
      <Ribbon />
      <FormulaBar />
      <ColHeader />
      <Sheet />
      <SheetTabs />
      <StatusBar />
      <Taskbar />

      <div className="absolute left-[1591px] top-[244px] flex h-[72px] w-[72px] items-center justify-center rounded-full border-[4px] border-white bg-linear-to-b from-[#3f98ea] to-[#5fb4f6] text-[20px] text-white shadow-[0_1px_4px_rgba(0,0,0,0.25)]">10:39</div>

      <div className="absolute left-[916px] top-[840px] border border-[#9a9a9a] bg-white px-[4px] py-[2px] text-[17px] leading-[22px] text-[#444] shadow-[2px_2px_3px_rgba(0,0,0,0.25)]">绘图区</div>

      <svg width="24" height="26" viewBox="0 0 24 26" className="absolute left-[880px] top-[657px]">
        <path d="M8 1h8v8h7v8h-7v8H8v-8H1V9h7z" fill="#fff" stroke="#111" strokeWidth="1.8" />
      </svg>

      <div className="absolute left-[1500px] top-[944px] whitespace-nowrap text-[62px] font-bold leading-[68px] tracking-[2px] text-white/80">万兴喵影</div>

      <div className="absolute left-[1347px] top-[929px] h-[94px] w-[128px] overflow-hidden rounded-[26px] bg-[#5c7280]/97">
        <div className="absolute bottom-0 left-[23px] h-[32px] w-[60px] bg-[#4c616e]" />
        <svg width="128" height="94" viewBox="0 0 128 94" className="absolute left-0 top-0">
          <path d="M32 29L53 14l22 16-23 16z" fill="#f3f3f6" />
          <path d="M78 31l20 16-47 33-19-15z" fill="#7fe8c4" />
          <path d="M41 72v-8h18v18H41zM47 64v10M53 64v10M41 70h18" fill="none" stroke="#2f8a6a" strokeWidth="1.2" />
          <rect x="43" y="74" width="18" height="9" fill="none" stroke="#25333c" strokeWidth="1.4" />
          <path d="M104 64h18v19h-18zM108 68h10v11h-10zM110 71h6M110 74h6M110 77h6" fill="none" stroke="#2c3a44" strokeWidth="1.3" />
        </svg>
      </div>
    </div>
  );
}
